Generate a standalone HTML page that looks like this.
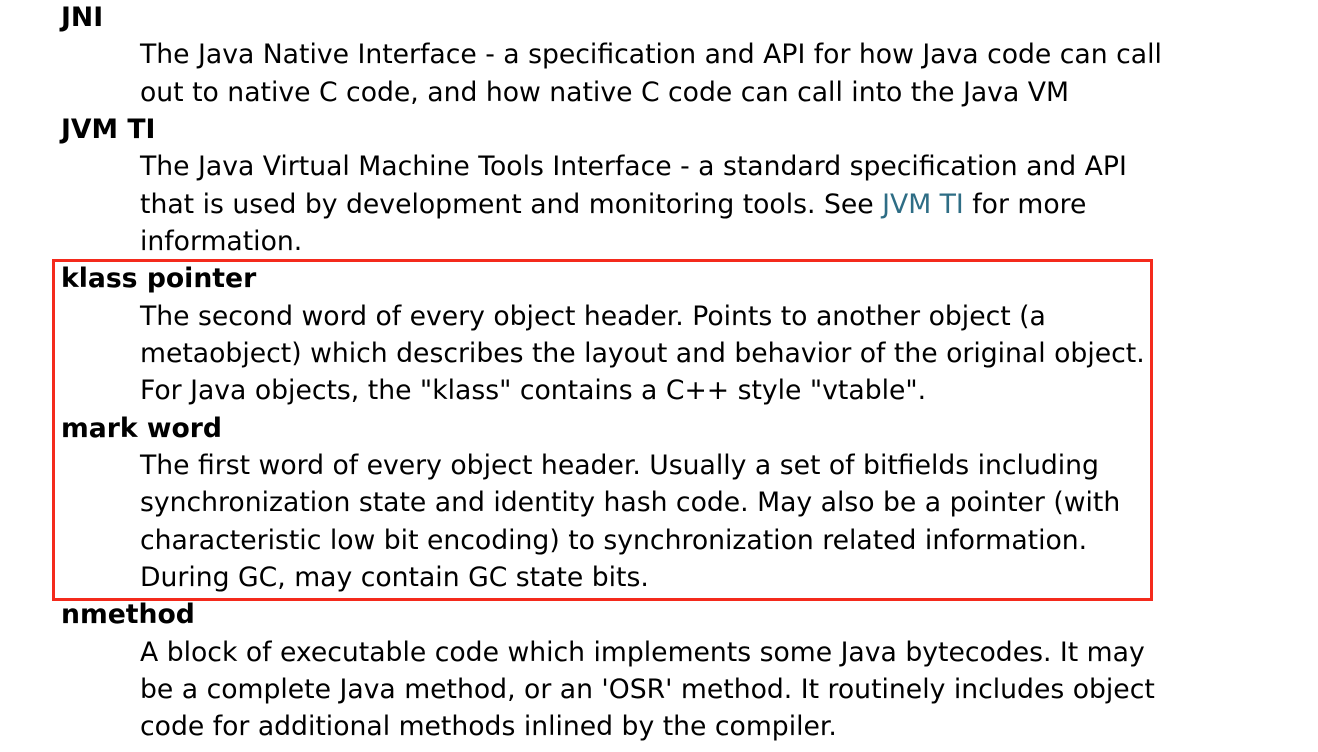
<!DOCTYPE html>
<html><head><meta charset="utf-8"><style>
html,body{margin:0;padding:0;background:#fff;width:1318px;height:752px;overflow:hidden}
body{font-family:"DejaVu Sans","Liberation Sans",sans-serif;font-size:26.65px;line-height:37.33px;color:#000;position:relative}
.c{position:absolute;top:-1px;left:0;width:1300px}
.dt{padding-left:61px;font-weight:bold;white-space:nowrap}
.dd{padding-left:140px;white-space:nowrap}
a{color:#2e6d85;text-decoration:none}
.box{position:absolute;left:52px;top:259px;width:1095px;height:336px;border:3px solid #f42a1c}
</style></head><body>
<div class="c">
<div class="dt">JNI</div>
<div class="dd">The Java Native Interface - a specification and API for how Java code can call<br>out to native C code, and how native C code can call into the Java VM</div>
<div class="dt">JVM TI</div>
<div class="dd">The Java Virtual Machine Tools Interface - a standard specification and API<br>that is used by development and monitoring tools. See <a>JVM TI</a> for more<br>information.</div>
<div class="dt">klass pointer</div>
<div class="dd">The second word of every object header. Points to another object (a<br>metaobject) which describes the layout and behavior of the original object.<br>For Java objects, the "klass" contains a C++ style "vtable".</div>
<div class="dt">mark word</div>
<div class="dd">The first word of every object header. Usually a set of bitfields including<br>synchronization state and identity hash code. May also be a pointer (with<br>characteristic low bit encoding) to synchronization related information.<br>During GC, may contain GC state bits.</div>
<div class="dt">nmethod</div>
<div class="dd">A block of executable code which implements some Java bytecodes. It may<br>be a complete Java method, or an 'OSR' method. It routinely includes object<br>code for additional methods inlined by the compiler.</div>
</div>
<div class="box"></div>
</body></html>
